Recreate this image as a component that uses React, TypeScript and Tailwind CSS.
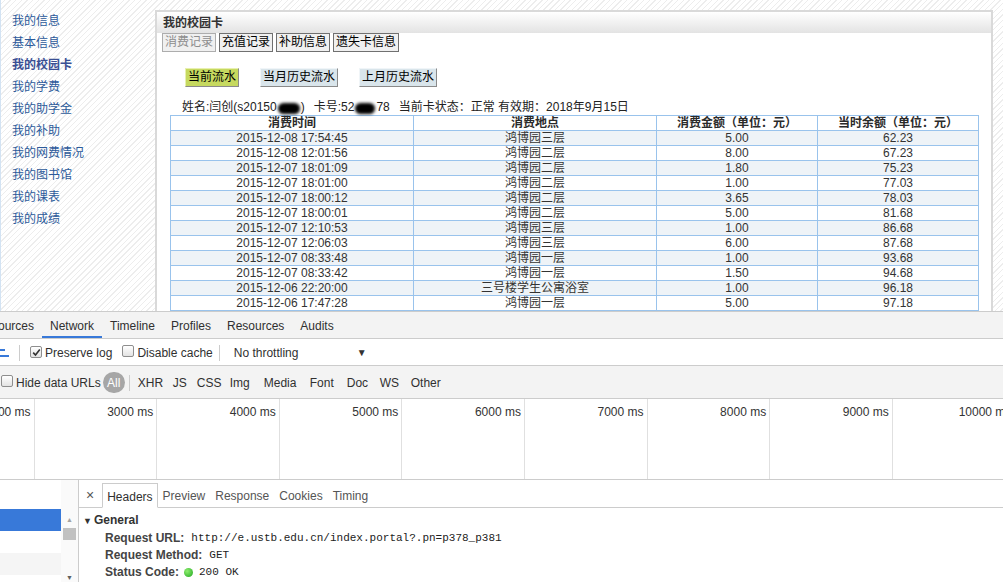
import React from 'react';

const navItems = ['我的信息', '基本信息', '我的校园卡', '我的学费', '我的助学金', '我的补助', '我的网费情况', '我的图书馆', '我的课表', '我的成绩'];

const records = [
  ['2015-12-08 17:54:45', '鸿博园三层', '5.00', '62.23'],
  ['2015-12-08 12:01:56', '鸿博园二层', '8.00', '67.23'],
  ['2015-12-07 18:01:09', '鸿博园二层', '1.80', '75.23'],
  ['2015-12-07 18:01:00', '鸿博园二层', '1.00', '77.03'],
  ['2015-12-07 18:00:12', '鸿博园二层', '3.65', '78.03'],
  ['2015-12-07 18:00:01', '鸿博园二层', '5.00', '81.68'],
  ['2015-12-07 12:10:53', '鸿博园三层', '1.00', '86.68'],
  ['2015-12-07 12:06:03', '鸿博园三层', '6.00', '87.68'],
  ['2015-12-07 08:33:48', '鸿博园一层', '1.00', '93.68'],
  ['2015-12-07 08:33:42', '鸿博园一层', '1.50', '94.68'],
  ['2015-12-06 22:20:00', '三号楼学生公寓浴室', '1.00', '96.18'],
  ['2015-12-06 17:47:28', '鸿博园一层', '5.00', '97.18'],
];

const headers = ['消费时间', '消费地点', '消费金额（单位：元）', '当时余额（单位：元）'];

const filters: [string, string][] = [
  ['XHR', 'w-[35px]'], ['JS', 'w-[24px]'], ['CSS', 'w-[33px]'], ['Img', 'w-[34px]'],
  ['Media', 'w-[46px]'], ['Font', 'w-[37px]'], ['Doc', 'w-[33px]'], ['WS', 'w-[31px]'], ['Other', 'w-[50px]'],
];

const ticks = [2000, 3000, 4000, 5000, 6000, 7000, 8000, 9000, 10000];

function CheckBox({ checked }: { checked?: boolean }) {
  return (
    <span className="inline-flex h-[12px] w-[12px] shrink-0 items-center justify-center rounded-[2px] border border-[#8e8e8e] bg-linear-to-b from-white to-[#e3e3e3]">
      {checked && (
        <svg width="9" height="9" viewBox="0 0 9 9">
          <path d="M1.2 4.6 L3.5 7 L7.8 1.6" fill="none" stroke="#333" strokeWidth="1.6" />
        </svg>
      )}
    </span>
  );
}

function Redact({ w }: { w: string }) {
  return <span className={`mx-[1px] inline-block h-[11px] ${w} rounded-full bg-black align-[-1px] blur-[1.5px]`} />;
}

export default function App() {
  const cjk = "font-['Liberation_Sans','Noto_Sans_CJK_SC',sans-serif]";

  return (
    <div className="h-[583px] w-[1003px] overflow-hidden bg-white font-['Liberation_Sans','Noto_Sans_CJK_SC',sans-serif]">
      {/* page viewport */}
      <div className="flex h-[311px] overflow-hidden bg-[image:repeating-linear-gradient(135deg,#ffffff_0px,#ffffff_3px,#ededed_3px,#ededed_4px)]">
        <ul className={`w-[155px] shrink-0 border-l border-[#d3e3f3] pl-[11px] pt-[10px] text-[12px] leading-[22px] text-[#2c5a9a] ${cjk}`}>
          {navItems.map((n) => (
            <li key={n} className={n === '我的校园卡' ? 'font-bold text-[#3a4f94]' : ''}>
              {n}
            </li>
          ))}
        </ul>

        <div className="mt-[10px] w-[838px] shrink-0 border-2 border-b-0 border-[#d9d9d9] bg-white">
          <div className="flex h-[21px] items-center bg-linear-to-b from-white to-[#e3e3e3] pl-[6px] pt-[1px] text-[12px] font-bold text-[#333]">
            我的校园卡
          </div>

          <div className="flex gap-[3px] px-[5px] text-[12px] leading-[17px]">
            <button className="border border-[#adadad] bg-[#f0f0f0] px-[2px] text-[#8d8d8d]">消费记录</button>
            <button className="border border-[#707070] bg-[#f0f0f0] px-[2px] text-black">充值记录</button>
            <button className="border border-[#707070] bg-[#f0f0f0] px-[2px] text-black">补助信息</button>
            <button className="border border-[#707070] bg-[#f0f0f0] px-[2px] text-black">遗失卡信息</button>
          </div>

          <div className="ml-[28px] mt-[16px] flex gap-[21px] text-[12px] leading-[17px] text-black">
            <button className="border border-[#e8f0b0] border-b-[#8a8a8a] border-r-[#8a8a8a] bg-[#c6d95f] px-[2px]">当前流水</button>
            <button className="border border-[#f0f5f8] border-b-[#8a8a8a] border-r-[#8a8a8a] bg-[#d9e5eb] px-[2px]">当月历史流水</button>
            <button className="border border-[#f0f5f8] border-b-[#8a8a8a] border-r-[#8a8a8a] bg-[#d9e5eb] px-[2px]">上月历史流水</button>
          </div>

          <div className="ml-[25px] mt-[13px] flex h-[14px] items-end whitespace-nowrap text-[12px] leading-[13px] text-[#222]">
            <span>姓名:闫创(s20150</span>
            <Redact w="w-[22px]" />
            <span>)</span>
            <span className="ml-[9px]">卡号:52</span>
            <Redact w="w-[20px]" />
            <span>78</span>
            <span className="ml-[9px]">当前卡状态：正常 有效期：2018年9月15日</span>
          </div>

          <div className="ml-[13px] mt-[1px] grid w-[809px] grid-cols-[243px_243px_161px_161px] border-l border-t border-[#99c3ec] text-[12px] leading-[14px] text-[#333]">
            {headers.map((h) => (
              <div key={h} className="h-[15px] border-b border-r border-[#99c3ec] text-center font-bold text-[#2a2a2a]">
                {h}
              </div>
            ))}
            {records.map((r, i) =>
              r.map((c, j) => (
                <div
                  key={`${i}-${j}`}
                  className={`h-[15px] border-b border-r border-[#99c3ec] text-center ${i % 2 === 0 ? 'bg-[#eef3f7]' : 'bg-white'}`}
                >
                  {c}
                </div>
              )),
            )}
          </div>
        </div>
      </div>

      {/* devtools */}
      <div className="h-[272px] whitespace-nowrap border-t border-[#cccccc] text-[12px] text-[#303030]">
        <div className="flex h-[26px] items-stretch overflow-hidden bg-[#f3f3f3]">
          <div className="ml-[-18px] flex items-center px-2 pt-[1px]">Sources</div>
          <div className="flex items-center border-b-2 border-[#3879d9] px-2 pt-[3px]">Network</div>
          <div className="flex items-center px-2 pt-[1px]">Timeline</div>
          <div className="flex items-center px-2 pt-[1px]">Profiles</div>
          <div className="flex items-center px-2 pt-[1px]">Resources</div>
          <div className="flex items-center px-2 pt-[1px]">Audits</div>
        </div>

        <div className="flex h-[27px] items-center border-t border-[#cccccc] bg-white pt-[1px]">
          <svg width="9" height="12" viewBox="0 0 9 12" className="shrink-0">
            <rect x="0" y="2" width="5" height="2" fill="#3879d9" />
            <rect x="0" y="8" width="9" height="2" fill="#3879d9" />
          </svg>
          <span className="ml-[10px] h-[16px] w-px bg-[#cccccc]" />
          <span className="ml-[10px]"><CheckBox checked /></span>
          <span className="ml-[3px]">Preserve log</span>
          <span className="ml-[10px]"><CheckBox /></span>
          <span className="ml-[3px]">Disable cache</span>
          <span className="ml-[6px] h-[16px] w-px bg-[#cccccc]" />
          <span className="ml-[14px] w-[123px]">No throttling</span>
          <span className="text-[10px] text-[#333]">▼</span>
        </div>

        <div className="flex h-[34px] items-center border-y border-[#cccccc] bg-[#f3f3f3] pt-[1px]">
          <span className="ml-[1px]"><CheckBox /></span>
          <span className="ml-[3px]">Hide data URLs</span>
          <span className="ml-[2px] flex h-[21px] w-[22px] shrink-0 items-center justify-center rounded-full bg-[#a6a6a6] text-white">All</span>
          <span className="ml-[4px] h-[16px] w-px bg-[#cccccc]" />
          <div className="ml-[8px] flex">
            {filters.map(([f, w]) => (
              <span key={f} className={w}>{f}</span>
            ))}
          </div>
        </div>

        <div className="flex h-[81px] overflow-hidden border-b border-[#cccccc]">
          <div className="ml-[-88px] flex">
            {ticks.map((t) => (
              <div key={t} className="w-[122.6px] shrink-0 border-r border-[#e0e0e0] pr-[3px] pt-[6px] text-right leading-[14px] text-[#333]">
                {t} ms
              </div>
            ))}
          </div>
        </div>

        <div className="flex h-[102px]">
          <div className="flex w-[79px] shrink-0 border-r border-[#cccccc]">
            <div className="w-[61px]">
              <div className="h-[29px] bg-white" />
              <div className="h-[22px] bg-[#3879d9]" />
              <div className="h-[22px] bg-white" />
              <div className="h-[22px] bg-[#f5f5f5]" />
            </div>
            <div className="flex w-[17px] flex-col items-center bg-[#fafafa]">
              <span className="mt-[36px] text-[7px] leading-[8px] text-[#a3a3a3]">▲</span>
              <span className="mt-[4px] h-[17px] w-[13px] bg-[#c1c1c1]" />
              <span className="mt-[34px] text-[7px] leading-[8px] text-[#606060]">▼</span>
            </div>
          </div>

          <div className="flex-1">
            <div className="flex h-[28px] items-end border-b border-[#cccccc]">
              <span className="mb-[5px] ml-[7px] text-[14px] leading-[14px] text-[#555]">×</span>
              <span className="mb-[-1px] ml-[8px] flex h-[25px] items-center border border-b-white border-[#cccccc] bg-white px-[4px] pt-[2px]">Headers</span>
              <span className="flex h-[24px] items-center px-[5px] pt-[1px] text-[#555]">Preview</span>
              <span className="flex h-[24px] items-center px-[5px] pt-[1px] text-[#555]">Response</span>
              <span className="flex h-[24px] items-center px-[5px] pt-[1px] text-[#555]">Cookies</span>
              <span className="flex h-[24px] items-center px-[5px] pt-[1px] text-[#555]">Timing</span>
            </div>
            <div className="pl-[4px] pt-[4px] leading-[17px]">
              <div className="font-bold text-[#333]">
                <span className="mr-[2px] text-[9px]">▼</span>General
              </div>
              <div className="pl-[22px]">
                <div className="flex items-center">
                  <span className="font-bold text-[#444]">Request URL:</span>
                  <span className="ml-[7px] font-['Liberation_Mono',monospace] text-[11px] text-[#222]">http://e.ustb.edu.cn/index.portal?.pn=p378_p381</span>
                </div>
                <div className="flex items-center">
                  <span className="font-bold text-[#444]">Request Method:</span>
                  <span className="ml-[7px] font-['Liberation_Mono',monospace] text-[11px] text-[#222]">GET</span>
                </div>
                <div className="flex items-center">
                  <span className="font-bold text-[#444]">Status Code:</span>
                  <span className="ml-[5px] h-[9px] w-[9px] rounded-full bg-[radial-gradient(circle_at_35%_35%,#8fef6f,#1fa51f)]" />
                  <span className="ml-[6px] font-['Liberation_Mono',monospace] text-[11px] text-[#222]">200 OK</span>
                </div>
              </div>
            </div>
          </div>
        </div>
      </div>
    </div>
  );
}
